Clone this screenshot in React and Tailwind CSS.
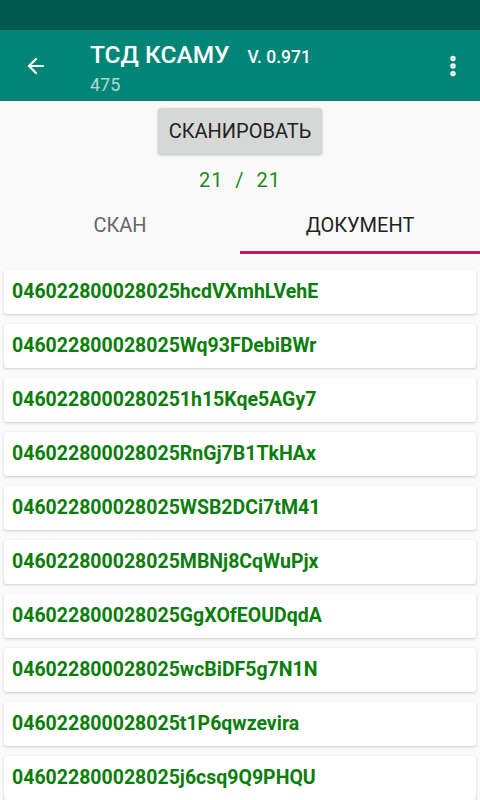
import { ArrowLeft, EllipsisVertical } from 'lucide-react';

const codes = [
  '046022800028025hcdVXmhLVehE',
  '046022800028025Wq93FDebiBWr',
  '0460228000280251h15Kqe5AGy7',
  '046022800028025RnGj7B1TkHAx',
  '046022800028025WSB2DCi7tM41',
  '046022800028025MBNj8CqWuPjx',
  '046022800028025GgXOfEOUDqdA',
  '046022800028025wcBiDF5g7N1N',
  '046022800028025t1P6qwzevira',
  '046022800028025j6csq9Q9PHQU',
];

export default function App() {
  return (
    <div className="w-[480px] h-[800px] overflow-hidden bg-[#fafafa] font-['Roboto',sans-serif]">
      {/* status bar */}
      <div className="h-[30px] bg-[#00574b]" />

      {/* toolbar */}
      <div className="h-[71px] bg-[#008577] flex items-center pl-[24px] pr-[14px] text-white">
        <ArrowLeft size={24} strokeWidth={2.2} />
        <div className="ml-[42px] flex-1 pt-[6px]">
          <div className="flex items-baseline gap-[18px] leading-none">
            <span className="text-[24.5px] font-medium">ТСД КСАМУ</span>
            <span className="text-[17.5px] font-medium">V. 0.971</span>
          </div>
          <div className="text-[18px] text-white/70 leading-none mt-[9px]">475</div>
        </div>
        <EllipsisVertical size={26} strokeWidth={3} />
      </div>

      {/* scan button */}
      <div className="flex flex-col items-center pt-[7px]">
        <button className="w-[164px] h-[46px] bg-[#d6d7d7] rounded-[3px] shadow-[0_1px_3px_rgba(0,0,0,0.25)] text-[20px] text-[#222] font-normal">
          СКАНИРОВАТЬ
        </button>
        <div className="mt-[16px] text-[20px] text-[#1b8a1b] tracking-[1px] leading-none">
          21&nbsp;&nbsp;/&nbsp;&nbsp;21
        </div>
      </div>

      {/* tabs */}
      <div className="flex mt-[8px] h-[56px]">
        <div className="flex-1 flex items-center justify-center text-[20px] text-[#666] pb-[3px]">СКАН</div>
        <div className="flex-1 flex items-center justify-center text-[20px] text-[#222] border-b-[3px] border-[#c2185b]">
          ДОКУМЕНТ
        </div>
      </div>

      {/* list */}
      <div className="flex flex-col gap-[10px] px-[4px] pt-[16px]">
        {codes.map((c) => (
          <div
            key={c}
            className="h-[44px] bg-white rounded-[3px] shadow-[0_1px_3px_rgba(0,0,0,0.18)] flex items-center pl-[8px] text-[19.5px] font-bold text-[#0a7d0a]"
          >
            {c}
          </div>
        ))}
      </div>
    </div>
  );
}
